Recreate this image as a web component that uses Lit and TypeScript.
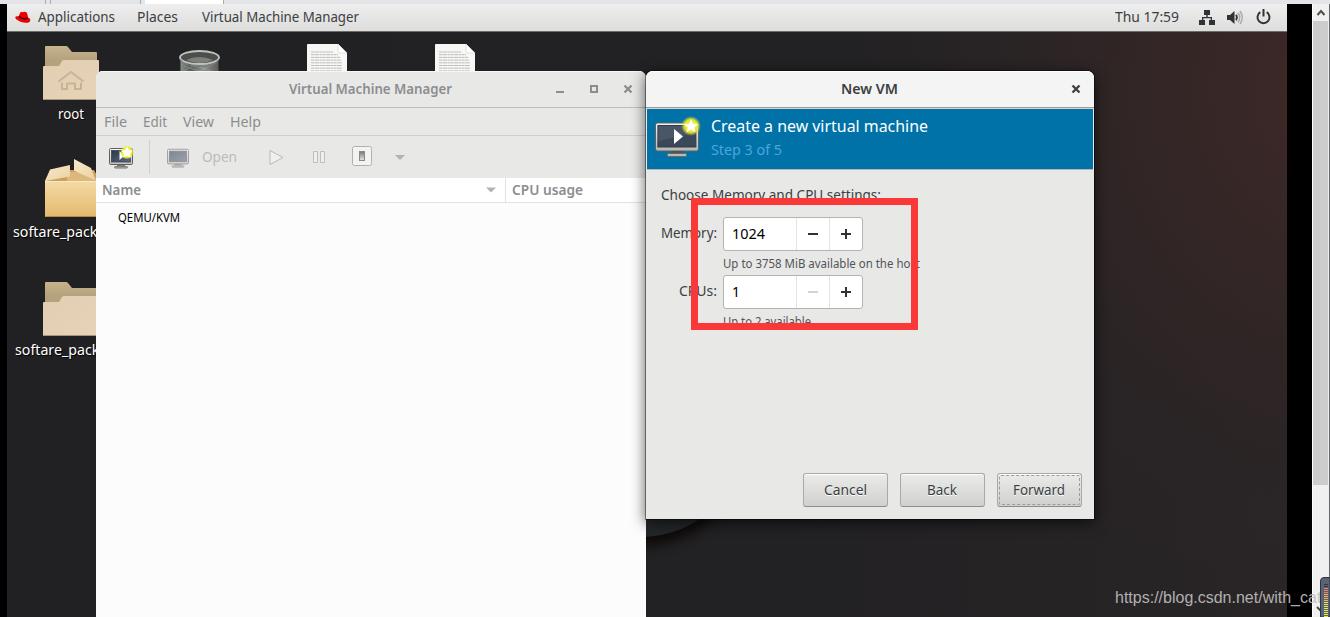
import { LitElement, html, svg, css } from "lit";
import { customElement, property } from "lit/decorators.js";

/* One line of interface text, fitted to a given advance width. Baseline sits 15px below the top. */
@customElement("ui-text")
class UiText extends LitElement {
  @property({ type: Number }) w = 50;
  @property() t = "";
  static styles = css`
    :host { display: block; height: 20px; flex: none; }
    svg { display: block; overflow: visible; }
    text { fill: currentColor; }
  `;
  render() {
    return html`<svg width=${this.w} height="20">
      <text x="0" y="15" textLength=${this.w} lengthAdjust="spacingAndGlyphs">${this.t}</text>
    </svg>`;
  }
}

const tx = (t: string, w: number, cls = "") => html`<ui-text class=${cls} .t=${t} .w=${w}></ui-text>`;

const folder = (home: boolean) => html`<svg class="ic" width="58" height="56" viewBox="0 0 58 56">
  <defs>
    <linearGradient id="fb" x1="0" y1="0" x2="0" y2="1"><stop offset="0" stop-color="#c6b48f"/><stop offset=".4" stop-color="#b5a17c"/></linearGradient>
    <linearGradient id="ff" x1="0" y1="0" x2="1" y2="1"><stop offset="0" stop-color="#e2ceb1"/><stop offset="1" stop-color="#e6d3b9"/></linearGradient>
  </defs>
  <path d="M2 1q0-1 1-1h20q1 0 2 1l4 5h24q1 0 1 1v28H2z" fill="url(#fb)"/>
  <path d="M0 21q0-1 1-1h15l3-5q.6-1 2-1h34q1 0 1 1v38q0 1-1 1H1q-1 0-1-1z" fill="url(#ff)"/>
  <path d="M.5 53.5h55" stroke="#a7957a"/>
  ${home ? svg`<path d="M15.500 35.500L28 26l12.500 9.500M19 36.500V43h5v-5.500h8V43h6v-6.500" fill="none" stroke="#c9b394" stroke-width="2"/>` : ""}
</svg>`;

const box = html`<svg class="ic" width="58" height="60" viewBox="0 0 58 60">
  <defs>
    <linearGradient id="bx" x1="0" y1="0" x2="0" y2="1"><stop offset="0" stop-color="#f5daa6"/><stop offset="1" stop-color="#e2ba6c"/></linearGradient>
    <linearGradient id="fl" x1="0" y1="0" x2="1" y2="1"><stop offset="0" stop-color="#faeacb"/><stop offset="1" stop-color="#e8cfa1"/></linearGradient>
  </defs>
  <path d="M0 22L6 11h43l6 11z" fill="#c9a15a"/>
  <path d="M22 13h11l17 9H22z" fill="#dcb97b"/>
  <rect y="22" width="56" height="36" fill="url(#bx)"/>
  <path d="M0 22.500h56" stroke="#fae8c4"/>
  <path d="M.5 57.500h55" stroke="#b98f45"/>
  <path d="M5 10.500L25 6v11.500L0 22z" fill="url(#fl)"/>
  <path d="M29 0l17 9 5 13L29 11.500z" fill="url(#fl)"/>
</svg>`;

const trash = html`<svg class="ic" width="42" height="26" viewBox="0 0 42 26">
  <defs>
    <linearGradient id="tr"><stop offset="0" stop-color="#8b8f8c"/><stop offset=".25" stop-color="#555957"/><stop offset=".6" stop-color="#8c908e"/><stop offset="1" stop-color="#5a5e5b"/></linearGradient>
  </defs>
  <path d="M1.500 9v17h38V9z" fill="url(#tr)"/>
  <path d="M5 16l30 10M12 14l25 9M3 22l15-8M12 26l22-12" stroke="#b4b7b5" stroke-width=".6" opacity=".6"/>
  <ellipse cx="20.500" cy="7.500" rx="19.500" ry="6.500" fill="#4c4e4b" stroke="#bfc3bf" stroke-width="1.800"/>
  <path d="M7 10q13-6 27 0-13 6-27 0z" fill="#7d807a"/>
  <path d="M1.500 9.500q3 6.500 19 7t19-7" fill="none" stroke="#777b78"/>
</svg>`;

const doc = html`<svg class="ic" width="40" height="40" viewBox="0 0 40 40">
  <path d="M0 1q0-1 1-1h30l9 9v31H0z" fill="#f7f7f6"/>
  <path d="M31 0v7q0 2 2 2h7z" fill="#fff" stroke="#cfcfcd" stroke-width=".6"/>
  <path d="M4 8h22M4 10.700h27M4 13.400h29M4 16.100h30M4 18.800h31M4 21.500h31M4 24.200h31M4 26.900h31" stroke="#b5b5b3" stroke-width=".9" stroke-dasharray="3 .4 5 .4 2 .4"/>
</svg>`;

const monitor = (w: number, h: number, screen: string, glow: boolean) => html`<svg class="ic" width=${w} height=${h} viewBox="0 0 46 42">
  <defs>
    <linearGradient id="mf" x1="0" y1="0" x2="0" y2="1"><stop offset="0" stop-color="#f6f6f5"/><stop offset="1" stop-color="#b5b7b3"/></linearGradient>
    <radialGradient id="gl"><stop offset="0" stop-color="#fffb50"/><stop offset=".65" stop-color="#ece82a" stop-opacity=".95"/><stop offset="1" stop-color="#d8e020" stop-opacity="0"/></radialGradient>
  </defs>
  <rect x="1.500" y="7" width="43" height="28" rx="2" fill="url(#mf)" stroke="#60635f"/>
  <rect x="3.900" y="9.500" width="38" height="21.500" fill=${screen} stroke="#303a48"/>
  <path d="M4 10h37v7L4 25z" fill="#fff" opacity=".08"/>
  <path d="M17 35h12v3H17z" fill="#50534f"/>
  <rect x="13.500" y="37.500" width="19" height="3" rx="1" fill="#b9bbb8" stroke="#666965"/>
  ${glow ? svg`<path d="M20 13v15l9-7.500z" fill="#fff"/>
  <circle cx="37" cy="10" r="10" fill="url(#gl)"/>
  <path d="M37 3l2 4.700 5.200.4-4 3.300 1.300 5-4.500-2.800-4.500 2.800 1.300-5-4-3.300 5.200-.4z" fill="#fff"/>` : ""}
</svg>`;

/* Toolbar-size monitor, drawn on its own 24px grid. */
const smallMonitor = (glow: boolean) => html`<svg class="ic" width=${glow ? 24 : 22} height=${glow ? 23 : 21} viewBox="0 0 24 23">
  <defs>
    <linearGradient id="sf" x1="0" y1="0" x2="0" y2="1"><stop offset="0" stop-color="#fafafa"/><stop offset="1" stop-color="#bfc0bd"/></linearGradient>
    <linearGradient id="ss" x1="0" y1="0" x2="1" y2="1"><stop offset="0" stop-color="#2c3849"/><stop offset="1" stop-color="#5b6980"/></linearGradient>
    <radialGradient id="sg"><stop offset="0" stop-color="#fffb40"/><stop offset=".7" stop-color="#f2ee2c"/><stop offset="1" stop-color="#e6e620" stop-opacity="0"/></radialGradient>
  </defs>
  <path d="M8 18h8v2H8z" fill="#777a76"/>
  <rect x=".5" y="2.500" width="23" height="16" rx="1.200" fill="url(#sf)" stroke="#5d605c"/>
  <rect x="2.500" y="4.500" width="19" height="11.500" fill="url(#ss)" stroke="#3a4350" stroke-width=".8"/>
  <rect x="5.500" y="20.500" width="13" height="1.600" rx=".8" fill="#aaaca8" stroke="#6a6d69" stroke-width=".8"/>
  ${glow ? svg`<path d="M10.500 5v9l5-4.500z" fill="#fff"/><circle cx="18" cy="6.500" r="7" fill="url(#sg)"/>
  <path d="M18 .5l1.900 3.700 4.100.5-3 2.900.8 4.100L18 9.800l-3.800 1.900.8-4.100-3-2.900 4.100-.5z" fill="#fff"/>` : ""}
</svg>`;

const arrow = html`<svg class="ic" width="10" height="6"><path d="M0 .5h10L5 5.500z" fill="#b1b3b1"/></svg>`;
const closeX = html`<svg class="ic" width="10" height="10"><path d="M1.500 1.500l7 7m0-7l-7 7" stroke="currentColor" stroke-width="2.300"/></svg>`;
const minus = html`<svg class="ic" width="10" height="10"><path d="M0 5h10" stroke="currentColor" stroke-width="2"/></svg>`;
const plus = html`<svg class="ic" width="10" height="10"><path d="M0 5h10M5 0v10" stroke="currentColor" stroke-width="2"/></svg>`;

@customElement("app-root")
class AppRoot extends LitElement {
  static styles = css`
    :host { display: block; width: 1330px; height: 617px; overflow: hidden; background: #000; position: relative;
      font: 14.600px "Noto Sans", "Open Sans", sans-serif; color: #3a4042; }
    * { box-sizing: border-box; }
    .ic { display: block; flex: none; overflow: visible; }
    .b { font-weight: 600; }
    .tabs { height: 4px; background: #e3e5e8; display: flex; }
    .tabs i { height: 4px; flex: none; }
    .t1 { width: 46px; border-right: 1px solid #a9abad; }
    .t2 { width: 5px; border-right: 1px solid #a9abad; }
    .t3 { width: 90px; border-right: 1px solid #a9abad; }
    .t4 { width: 4px; }
    .t5 { width: 79px; background: #fff; border-right: 1px solid #a9abad; }
    .main { display: flex; height: 613px; }
    .edge { width: 7px; flex: none; }
    .screen { width: 1280px; flex: none; display: flex; flex-direction: column; }
    .panel { height: 28px; flex: none; background: linear-gradient(#eeeeee, #dddddc); border-bottom: 1px solid #6b6c6b; display: flex; padding: 3px 15px 0 8px; }
    .hat { margin: 4px 7px 0 0; }
    .places { margin: 0 24px 0 22px; }
    .grow { flex: 1; }
    .net { margin: 3px 12px 0 20px; }
    .vol { margin: 3px 13px 0 0; }
    .pow { margin: 2px 1px 0 0; }
    .desk { position: relative; flex: 1; overflow: hidden;
      background: radial-gradient(ellipse 480px 540px at 1330px 60px, #3e2928 0, #342626 35%, rgba(43,36,37,.6) 70%, rgba(38,35,36,0) 100%),
        linear-gradient(90deg, #212123 0, #222123 60%, #292526 100%); }
    .item { position: absolute; color: #fff; text-shadow: 1px 1px 1px #000; }
    .i1 { left: 36px; top: 14px; } .i1 .cap { margin: 2px 0 0 15px; }
    .i2 { left: 38px; top: 127px; } .i2 .cap { margin: 3px 0 0 -32px; }
    .i3 { left: 36px; top: 250px; } .i3 .cap { margin: 2px 0 0 -28px; }
    .i4 { left: 172px; top: 18px; }
    .i5 { left: 300px; top: 12px; }
    .i6 { left: 428px; top: 12px; }
    .disc { position: absolute; left: 529px; top: 295px; width: 210px; height: 210px; border-radius: 50%; background: #232628; box-shadow: 0 9px 12px #100a0a; }
    .win { position: absolute; display: flex; flex-direction: column; }
    .vmm { left: 89px; top: 39px; width: 550px; height: 560px; background: #fcfcfc; border-radius: 7px 7px 0 0; overflow: hidden; color: #8b8e8f; }
    .title { height: 37px; flex: none; display: flex; align-items: center; border-bottom: 1px solid #bdbfbb; background: #e8e8e7; box-shadow: inset 0 1px #f6f6f5; }
    .vmm .title { padding: 0 13px 0 193px; }
    .ctl { display: flex; gap: 24px; align-items: center; }
    .menu { height: 28px; flex: none; display: flex; background: #e8e8e7; border-bottom: 1px solid #cfd0cd; padding: 4px 8px; gap: 16px; }
    .tools { height: 42px; flex: none; display: flex; background: #e8e8e7; align-items: center; padding-left: 13px; }
    .sep { width: 1px; height: 34px; background: #cfd0cd; margin: 0 17px 0 16px; }
    .open { color: #babcbb; margin: 0 32px 0 13px; }
    .faded { opacity: .55; }
    .heads { height: 25px; flex: none; display: flex; border-bottom: 1px solid #e2e2e1; background: #fff; }
    .h1 { width: 410px; display: flex; justify-content: space-between; align-items: center; padding: 0 9px 0 6px; border-right: 1px solid #e2e2e1; }
    .h2 { padding: 2px 6px; }
    .h1 ui-text { margin-top: -1px; }
    .row { padding: 4px 22px; color: #000; font-size: 12px; }
    .dlg { left: 639px; top: 39px; width: 448px; height: 448px; background: #e8e8e7; border-radius: 7px 7px 0 0; box-shadow: 0 0 0 1px rgba(0,0,0,.42), 0 3px 14px 1px rgba(0,0,0,.6); }
    .dlg .title { background: #f4f4f4; border-radius: 7px 7px 0 0; padding: 0 13px 0 195px; box-shadow: inset 0 1px #fff, 0 1px #d5d5d2; border-bottom-color: #9b9c97; }
    .hero { margin: 1px 1px 0; height: 60px; flex: none; background: #0072a8; display: flex; padding: 7px 7px; color: #fff; box-shadow: 0 1px #b5b6b2; }
    .heroText { padding: 1px 0 0 11px; }
    .big { font-size: 17px; }
    .step { color: #4ba6da; margin-top: 3px; }
    .form { flex: 1; padding: 16px 15px; }
    .line { display: flex; }
    .line.first { margin-top: 12px; }
    .lab { width: 62px; display: flex; padding: 6px 6px 0 0; justify-content: flex-end; }
    .spin { width: 140px; height: 34px; border: 1px solid #b3b4b0; border-radius: 3px; background: #fff; display: flex; color: #000; }
    .val { width: 72px; padding: 6px 0 0 8px; }
    .pm { width: 33px; border-left: 1px solid #e3e3e2; display: flex; align-items: center; justify-content: center; color: #2e3436; }
    .off { color: #d3d4d3; }
    .hint { margin: 2px 0 2px 62px; font-size: 12px; color: #515557; }
    .acts { display: flex; gap: 12px; padding: 0 12px 12px 157px; }
    .btn { width: 85px; height: 34px; border: 1px solid #a9aaa7; border-bottom-color: #8c8e8a; border-radius: 3px; background: linear-gradient(#ebebea, #d0d0cf); box-shadow: inset 0 1px #fff; display: flex; padding: 6px 0 0 20px; position: relative; text-shadow: 0 1px #fff; }
    .btn.back { padding-left: 26px; }
    .btn.focus { padding-left: 15px; }
    .focus::after { content: ""; position: absolute; inset: 1px; border: 1px dashed #9b9d9a; border-radius: 2px; }
    .mark { position: absolute; left: 691px; top: 198px; width: 227px; height: 132px; border: 7px solid #fb3838; }
    .scroll { width: 18px; margin-left: 25px; background: #f0f0f0; border-right: 1px solid #65676b; border-left: 1px solid #fff; flex: none; padding-right: 1px; }
    .up { height: 17px; display: flex; justify-content: center; padding-top: 5px; }
    .thumb { height: 464px; background: #cdcdcd; }
    .wm { position: absolute; left: 1115px; top: 589px; font-family: "Liberation Sans", Arial, sans-serif; font-size: 16px; color: #c0bfc0; opacity: .9; }
    .meter { position: absolute; left: 1316px; top: 577px; }
  `;

  render() {
    return html`
      <div class="tabs"><i class="t1"></i><i class="t2"></i><i class="t3"></i><i class="t4"></i><i class="t5"></i></div>
      <div class="main">
        <div class="edge"></div>
        <div class="screen">
          <div class="panel">
            <svg class="ic hat" width="16" height="13" viewBox="0 0 16 13">
              <path d="M4.500 3.500C5 1 6 .5 8 1.300 10 .3 11.800 1 12.300 3l.8 3.500c2 .8 2.600 2.300 1.900 3.700-1 2.200-6 2-9.500.5C2 9.300 0 7.500.300 6 .600 5 2 4.900 3.700 5.600z" fill="#e00"/>
              <path d="M4 5.200c1.500 2.300 6.500 3.500 8.900 1.800" fill="none" stroke="#300" stroke-width="1.300"/>
            </svg>
            ${tx("Applications", 77)}${tx("Places", 41, "places")}${tx("Virtual Machine Manager", 157)}
            <div class="grow"></div>
            ${tx("Thu 17:59", 64)}
            <svg class="ic net" width="16" height="16" fill="#2e3436"><path d="M5 0h6v5H5zM0 10h6v5H0zM10 10h6v5h-6zM7.300 5h1.400v2H13v3h-1.300V8.300H4.300V10H3V7h4.300z"/></svg>
            <svg class="ic vol" width="16" height="16"><path d="M0 5h3l4.500-4v13L3 10H0z" fill="#2e3436"/><path d="M9 4.800q2 2.700 0 5.400" fill="none" stroke="#2e3436" stroke-width="1.600"/><path d="M11 2.800q3.500 4.700 0 9.400M13 1q4.500 6.500 0 13" fill="none" stroke="#a8aaa9" stroke-width="1.500"/></svg>
            <svg class="ic pow" width="15" height="16"><path d="M4.300 3.200a6 6 0 1 0 6.400 0M7.500 0v7.500" fill="none" stroke="#2e3436" stroke-width="2"/></svg>
          </div>
          <div class="desk">
            <div class="disc"></div>
            <div class="item i1">${folder(true)}<div class="cap">${tx("root", 26)}</div></div>
            <div class="item i2">${box}<div class="cap">${tx("softare_packages", 116)}</div></div>
            <div class="item i3">${folder(false)}<div class="cap">${tx("softare_package", 109)}</div></div>
            <div class="item i4">${trash}</div>
            <div class="item i5">${doc}</div>
            <div class="item i6">${doc}</div>

            <div class="win vmm">
              <div class="title b">${tx("Virtual Machine Manager", 163)}<div class="grow"></div>
                <div class="ctl">
                  <svg class="ic" width="10" height="10"><path d="M1 8h8" stroke="currentColor" stroke-width="2"/></svg>
                  <svg class="ic" width="10" height="10"><rect x="2" y="2" width="6" height="6" fill="none" stroke="currentColor" stroke-width="2"/></svg>
                  ${closeX}
                </div>
              </div>
              <div class="menu">${tx("File", 23)}${tx("Edit", 24)}${tx("View", 31)}${tx("Help", 31)}</div>
              <div class="tools">
                ${smallMonitor(true)}
                <div class="sep"></div>
                <div class="faded">${smallMonitor(false)}</div>
                ${tx("Open", 35, "open")}
                <svg class="ic" width="16" height="16"><path d="M1 1.500L14 8.500 1 15.500z" fill="#f0f0ef" stroke="#b9bab8"/></svg>
                <svg class="ic" width="70" height="22"><path d="M28.500 5.500h4v11h-4zM35.500 5.500h4v11h-4z" fill="#efefee" stroke="#bebfbd"/></svg>
                <svg class="ic" width="20" height="22"><defs><linearGradient id="sw" x1="0" y1="0" x2="0" y2="1"><stop offset="0" stop-color="#777"/><stop offset="1" stop-color="#e8e8e8"/></linearGradient></defs><rect x="-2.500" y=".5" width="19" height="19" rx="2" fill="#f3f3f2" stroke="#b1b2b0"/><rect x="4.500" y="5.500" width="5" height="9" fill="url(#sw)" stroke="#888"/></svg>
                <svg class="ic" width="40" height="4"><path d="M20 0h10L25 5z" fill="#b1b3b1"/></svg>
              </div>
              <div class="heads b"><div class="h1">${tx("Name", 39)}${arrow}</div><div class="h2">${tx("CPU usage", 71)}</div></div>
              <div class="row">${tx("QEMU/KVM", 62)}</div>
            </div>

            <div class="win dlg">
              <div class="title b">${tx("New VM", 57)}<div class="grow"></div>${closeX}</div>
              <div class="hero">${monitor(46, 42, "#3b485a", true)}
                <div class="heroText">${tx("Create a new virtual machine", 217, "big")}${tx("Step 3 of 5", 71, "step")}</div>
              </div>
              <div class="form">
                ${tx("Choose Memory and CPU settings:", 220)}
                <div class="line first"><div class="lab">${tx("Memory:", 56)}</div>
                  <div class="spin"><div class="val">${tx("1024", 33)}</div><div class="pm">${minus}</div><div class="pm">${plus}</div></div></div>
                <div class="hint">${tx("Up to 3758 MiB available on the host", 197)}</div>
                <div class="line"><div class="lab">${tx("CPUs:", 38)}</div>
                  <div class="spin"><div class="val">${tx("1", 8)}</div><div class="pm off">${minus}</div><div class="pm">${plus}</div></div></div>
                <div class="hint">${tx("Up to 2 available", 88)}</div>
              </div>
              <div class="acts">
                <div class="btn">${tx("Cancel", 43)}</div><div class="btn back">${tx("Back", 30)}</div><div class="btn focus">${tx("Forward", 52)}</div>
              </div>
            </div>
          </div>
        </div>
        <div class="scroll"><div class="up"><svg class="ic" width="8" height="7"><path d="M.5 6L4 2l3.500 4" fill="none" stroke="#505050" stroke-width="2"/></svg></div><div class="thumb"></div></div>
      </div>
      <div class="mark"></div>
      <div class="wm">https://blog.csdn.net/with_cat</div>
      <svg class="ic meter" width="14" height="40">
        <path d="M1 30l3 3 3-3" fill="none" stroke="#505050" stroke-width="2"/>
        <path d="M4.500 40V4q0-3.500 3.500-3.500h6V40z" fill="#5b6272" stroke="#30343d"/>
        ${[7, 9, 11, 13, 15, 17, 19, 21, 23, 25, 27, 29, 31, 33, 35, 37, 39].map((y, i) => svg`<path d="M8 ${y + 0.5}h4" stroke=${i < 2 ? "#333846" : i < 5 ? "#f0805a" : i < 9 ? "#f0b45a" : "#e6ea5c"}/>`)}
      </svg>`;
  }
}
